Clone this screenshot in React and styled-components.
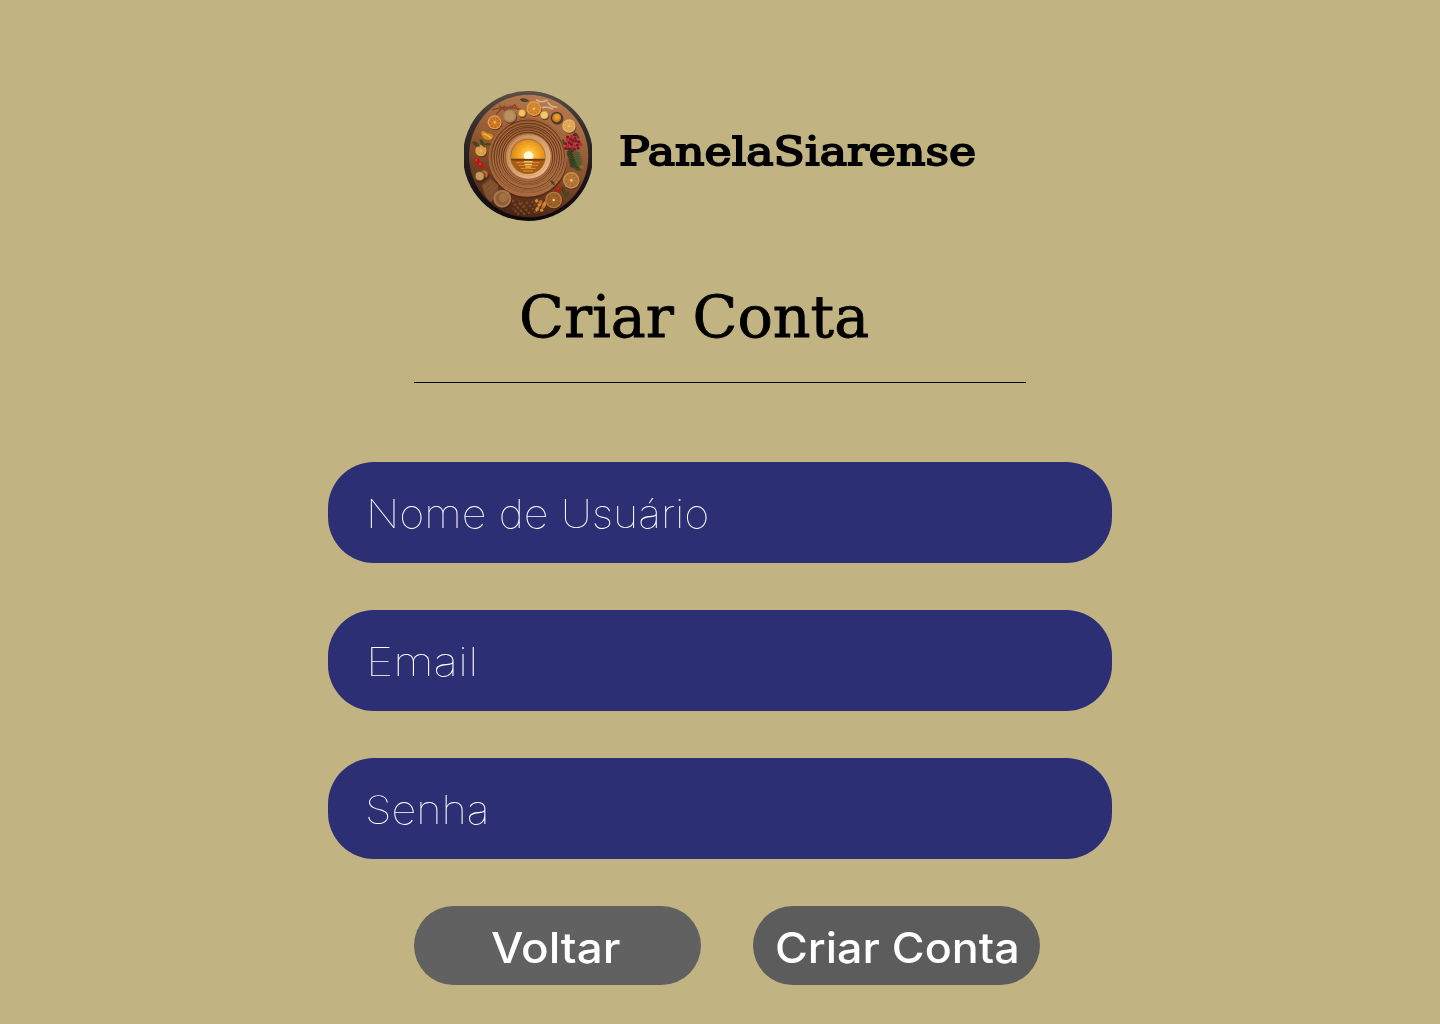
import React from "react";
import styled, { createGlobalStyle } from "styled-components";

const GlobalStyle = createGlobalStyle`
  * { box-sizing: border-box; }
  body { margin: 0; background: #c1b482; }
`;

const Page = styled.main`
  width: 1440px;
  height: 1024px;
  padding-top: 91px;
  overflow: hidden;
  display: flex;
  flex-direction: column;
  align-items: center;
  background: #c1b482;
`;

const Header = styled.header`
  width: 512px;
  height: 130px;
  display: flex;
  gap: 27px;
`;

const Emblem = styled.svg`
  width: 128px;
  height: 130px;
  flex: none;
`;

const Glyphs = styled.span`
  display: inline-block;
  white-space: nowrap;
  transform-origin: 0 50%;
  transform: scaleX(${(p) => p.$stretch || 1});
  will-change: transform;
`;

const Brand = styled.div`
  padding-top: 30px;
  font: 400 40px/60px "DejaVu Serif", serif;
  -webkit-text-stroke: 1.8px #000;
  color: #000;
`;

const Title = styled.h1`
  width: 612px;
  height: 162px;
  margin: 0;
  padding: 56px 0 0 105px;
  border-bottom: 1px solid #000;
  font: 400 57px/80px "DejaVu Serif", serif;
  -webkit-text-stroke: 0.8px #000;
  color: #000;
`;

const Form = styled.form`
  width: 784px;
  margin-top: 79px;
  display: flex;
  flex-direction: column;
  gap: 47px;
`;

const Field = styled.label`
  height: 101px;
  padding: 2px 0 0 ${(p) => p.$inset || 38}px;
  display: flex;
  align-items: center;
  border-radius: 46px;
  background: #2d2f74;
  color: #fff;
  font: 100 39px/48px Inter, sans-serif;
`;

const Actions = styled.div`
  padding-left: 86px;
  display: flex;
  gap: 52px;
`;

const Button = styled.button`
  width: 287px;
  height: 79px;
  padding: 4px 0 0 ${(p) => p.$inset}px;
  border: 0;
  border-radius: 40px;
  text-align: left;
  background: ${(p) => p.$tone};
  color: #fff;
  font: 500 42px/52px Inter, sans-serif;
`;

const ripples = [109, 101, 94, 87, 80, 74];

function Citrus({ x, y, r, fill = "#cf7f25", rim = "#e2a452" }) {
  return (
    <g transform={`translate(${x} ${y})`}>
      <circle cx="2" cy="3" r={r} fill="#3b1c0d" opacity=".55" />
      <circle r={r} fill={rim} />
      <circle r={r * 0.83} fill={fill} />
      {[0, 45, 90, 135].map((a) => (
        <path key={a} d={`M${-r * 0.8} 0H${r * 0.8}`} stroke={rim} strokeWidth="1.4" transform={`rotate(${a + 12})`} />
      ))}
      <circle r={r * 0.15} fill="#f0c37a" />
    </g>
  );
}

function Bowl({ x, y, r, fill, rim }) {
  return (
    <g>
      <circle cx={x + 2} cy={y + 3} r={r} fill="#2b140a" opacity=".6" />
      <circle cx={x} cy={y} r={r} fill={rim} />
      <circle cx={x} cy={y} r={r * 0.75} fill={fill} />
    </g>
  );
}

function Leaf({ x, y, a, s = 1, fill = "#39431f" }) {
  return (
    <g transform={`translate(${x} ${y}) rotate(${a}) scale(${s})`}>
      <path d="M-15 0Q-5 -11 15 0Q-3 10 -15 0Z" fill={fill} />
      <path d="M-13 0H13" stroke="#6a6a38" strokeWidth="1" />
    </g>
  );
}

function PlateEmblem() {
  return (
    <Emblem viewBox="24 21 384 390" preserveAspectRatio="none" aria-label="PanelaSiarense">
      <defs>
        <linearGradient id="rim" x1="0" y1="0" x2="0" y2="1">
          <stop offset="0" stopColor="#5a5149" />
          <stop offset=".25" stopColor="#37302d" />
          <stop offset=".7" stopColor="#1b1519" />
          <stop offset="1" stopColor="#0d090d" />
        </linearGradient>
        <linearGradient id="wood" x1=".65" y1="0" x2=".35" y2="1">
          <stop offset="0" stopColor="#b97b50" />
          <stop offset=".5" stopColor="#8f542f" />
          <stop offset="1" stopColor="#432313" />
        </linearGradient>
        <linearGradient id="disc" x1=".3" y1="0" x2=".6" y2="1">
          <stop offset="0" stopColor="#8b5027" />
          <stop offset="1" stopColor="#aa6c41" />
        </linearGradient>
        <linearGradient id="ring" x1="0" y1="0" x2="1" y2="1">
          <stop offset="0" stopColor="#b87843" />
          <stop offset="1" stopColor="#f2c995" />
        </linearGradient>
        <radialGradient id="sky" cx=".52" cy=".48" r=".55">
          <stop offset="0" stopColor="#ffe27a" />
          <stop offset=".35" stopColor="#fbb52c" />
          <stop offset="1" stopColor="#d27a12" />
        </radialGradient>
        <clipPath id="sunClip"><circle cx="216" cy="218" r="51" /></clipPath>
      </defs>
      <circle cx="216" cy="216" r="195" fill="url(#rim)" />
      <ellipse cx="218" cy="216" rx="179" ry="184" fill="url(#wood)" />

      <circle cx="216" cy="228" r="117" fill="#482310" opacity=".6" />
      <circle cx="215" cy="220" r="117" fill="url(#disc)" />
      <circle cx="215" cy="221" r="115" fill="none" stroke="#a9683d" strokeWidth="4" />
      {ripples.map((r, i) => (
        <g key={r} fill="none">
          <circle cx="216" cy={217 + (i % 3)} r={r} stroke="#5e321a" strokeWidth="2.6" />
          <circle cx="216" cy={220 + (i % 2)} r={r - 3} stroke="#b97b4c" strokeWidth="2" />
        </g>
      ))}
      <circle cx="217" cy="217" r="67" fill="url(#ring)" />
      <circle cx="217" cy="217" r="59" fill="none" stroke="#d5a36c" strokeWidth="3" />
      <circle cx="216" cy="218" r="53" fill="#a3622d" />
      <g clipPath="url(#sunClip)">
        <rect x="160" y="160" width="112" height="112" fill="url(#sky)" />
        <rect x="160" y="226" width="112" height="50" fill="#a95a12" />
        <path d="M162 227H272" stroke="#6d3e14" strokeWidth="5" />
        <path d="M180 236H251M187 244H246M194 253H239M201 261H231" stroke="#dc942f" strokeWidth="3" />
        <path d="M204 233H230M206 241H228M208 249H226" stroke="#ffdf79" strokeWidth="3" />
        <path d="M206 224A14 14 0 1 1 229 224Z" fill="#fffbe0" />
      </g>

      <path d="M108 78Q146 62 201 78M120 91L143 68L158 80L176 62L185 78M130 65L147 79L168 66" fill="none" stroke="#81422a" strokeWidth="4" />
      <path d="M137 73l9-10 5 15 13-14 5 12 15-8" fill="none" stroke="#9e4e2b" strokeWidth="3" />
      <path d="M242 48Q256 58 273 49M276 56Q287 71 302 69M255 72Q271 66 289 74" fill="none" stroke="#d8b08a" strokeWidth="5" strokeLinecap="round" />
      <Leaf x={206} y={49} a={8} />
      <Citrus x={234} y={74} r={22} />
      <Citrus x={116} y={115} r={21} fill="#c66b1b" />
      <Citrus x={339} y={126} r={20} fill="#dda04b" rim="#e9bd76" />
      <Citrus x={75} y={200} r={17} fill="#d99b44" />
      <Citrus x={346} y={289} r={25} fill="#ad7134" rim="#c9904c" />
      <Citrus x={293} y={348} r={25} fill="#955a25" rim="#b97b3c" />
      <Bowl x={161} y={96} r={20} fill="#b99062" rim="#aa8057" />
      <Bowl x={198} y={87} r={12} fill="#efc665" rim="#ce8b28" />
      <Bowl x={265} y={93} r={13} fill="#efc878" rim="#d79a38" />
      <Bowl x={302} y={101} r={18} fill="#d27c19" rim="#463c34" />
      <circle cx="303" cy="99" r="8" fill="#e79f32" />
      <path d="M76 143Q84 138 94 148Q110 147 111 158Q103 174 86 165Q73 153 76 143Z" fill="#d18a20" />
      <path d="M82 149Q96 153 106 163" stroke="#f2bd50" strokeWidth="4" fill="none" />
      <Leaf x={60} y={181} a={30} /><Leaf x={79} y={178} a={60} /><Leaf x={96} y={181} a={0} s={0.7} />
      <g fill="#b51c16"><circle cx="63" cy="231" r="9" /><circle cx="75" cy="243" r="9" /><circle cx="309" cy="316" r="8" /></g>
      <g fill="#ed6550"><circle cx="60" cy="228" r="2.5" /><circle cx="72" cy="240" r="2.5" /><circle cx="307" cy="313" r="2" /></g>
      <Bowl x={84} y={270} r={14} fill="#bb6825" rim="#8b431b" />
      <Bowl x={71} y={276} r={16} fill="#c79b5b" rim="#75502b" />
      <path d="M78 304L103 284L127 304L124 330L105 355Q82 335 78 304Z" fill="#80502d" />
      <path d="M84 312L105 294M88 322L117 299M94 333L121 308" stroke="#956338" strokeWidth="2" />
      <Bowl x={139} y={344} r={27} fill="#8f5c38" rim="#aa754b" />
      <circle cx="143" cy="341" r="14" fill="#a17043" />

      {Array.from({ length: 24 }, (_, i) => {
        const angle = i * 2.4;
        const reach = Math.sqrt(i / 24);
        return <circle key={i} cx={350 + Math.cos(angle) * 26 * reach} cy={178 + Math.sin(angle) * 27 * reach} r="4.9" fill={i % 3 ? "#871326" : "#b52a3a"} />;
      })}
      <Leaf x={362} y={153} a={48} s={0.7} /><Leaf x={322} y={174} a={75} s={0.6} />
      {Array.from({ length: 14 }, (_, i) => (
        <Leaf key={i} x={342 + ((i * 17) % 32)} y={203 + i * 3.7} a={-55 + ((i * 47) % 100)} s={1} fill={i % 2 ? "#4f5930" : "#303b20"} />
      ))}
      <Leaf x={365} y={254} a={15} /><Leaf x={290} y={296} a={50} s={0.7} />
      <Leaf x={323} y={321} a={70} /><Leaf x={332} y={332} a={120} s={0.8} />
      <circle cx="377" cy="249" r="7" fill="#9a6724" />
      {Array.from({ length: 64 }, (_, i) => (
        <path key={i} d={`M${166 + ((i * 37) % 77)} ${350 + ((i * 19) % 41)}l5 -4 4 5 -5 4Z`} fill={["#8b4c24", "#69371d", "#54301b"][i % 3]} />
      ))}
      {Array.from({ length: 11 }, (_, i) => (
        <path key={i} d={`M${236 + ((i * 11) % 29)} ${349 + ((i * 7) % 30)}l8 -5 4 8 -8 5Z`} fill={i % 2 ? "#b96f22" : "#d28b35"} />
      ))}
    </Emblem>
  );
}

export default function App() {
  return (
    <Page>
      <GlobalStyle />
      <Header>
        <PlateEmblem />
        <Brand><Glyphs $stretch={1.145}>PanelaSiarense</Glyphs></Brand>
      </Header>
      <Title><Glyphs $stretch={1.03}>Criar Conta</Glyphs></Title>
      <Form onSubmit={(e) => e.preventDefault()}>
        <Field><Glyphs $stretch={1.108}>Nome de Usuário</Glyphs></Field>
        <Field $inset={37.5}><Glyphs $stretch={1.195}>Email</Glyphs></Field>
        <Field $inset={37}><Glyphs $stretch={1.11}>Senha</Glyphs></Field>
        <Actions>
          <Button type="button" $tone="#616161" $inset={77}><Glyphs $stretch={1.09}>Voltar</Glyphs></Button>
          <Button type="submit" $tone="#5c5c5c" $inset={22}><Glyphs $stretch={1.067}>Criar Conta</Glyphs></Button>
        </Actions>
      </Form>
    </Page>
  );
}
